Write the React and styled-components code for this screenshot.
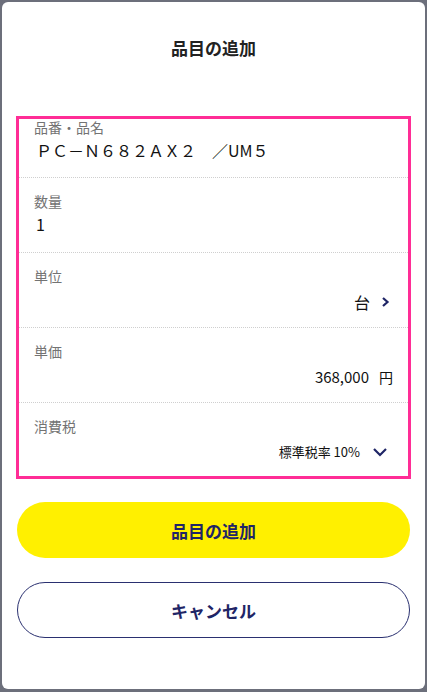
import React from "react";
import styled, { createGlobalStyle } from "styled-components";

const Global = createGlobalStyle`
  html, body { margin: 0; padding: 0; }
  body {
    background: #6c6f7b;
    font-family: "Noto Sans CJK JP", "Noto Sans", sans-serif;
    -webkit-font-smoothing: antialiased;
  }
`;

const Backdrop = styled.div`
  padding: 2px 2px 3px 2px;
  height: 692px;
  box-sizing: border-box;
`;

const Modal = styled.div`
  background: #fff;
  border-radius: 6px;
  height: 100%;
  box-sizing: border-box;
  padding: 34px 14px 0 14px;
  display: flex;
  flex-direction: column;
`;

const Title = styled.h1`
  margin: 0;
  font-size: 17px;
  line-height: 24px;
  font-weight: 700;
  color: #222;
  text-align: center;
`;

const Form = styled.div`
  margin-top: 56px;
  border: 3px solid #ff2d96;
  display: flex;
  flex-direction: column;
`;

const Row = styled.div`
  height: ${(p) => p.$h}px;
  box-sizing: border-box;
  padding: ${(p) => (p.$first ? 0 : 15)}px 22px 0 15px;
  border-top: ${(p) => (p.$first ? "none" : "1px dotted #cfcfcf")};
  display: flex;
  flex-direction: column;
`;

const Label = styled.div`
  font-size: 14px;
  line-height: 16px;
  color: #737373;
`;

const Value = styled.div`
  margin-top: ${(p) => (p.$right ? 6 : 3)}px;
  font-size: ${(p) => p.$size || 16}px;
  line-height: 24px;
  color: #111;
  display: flex;
  align-items: center;
  justify-content: ${(p) => (p.$right ? "flex-end" : "flex-start")};
  gap: ${(p) => p.$gap || 0}px;
  padding-left: ${(p) => (p.$right ? 0 : 2)}px;
`;

const Unit = styled.span`
  font-size: 14px;
  margin-left: 10px;
  margin-right: -7px;
`;

const Buttons = styled.div`
  display: flex;
  flex-direction: column;
  gap: 24px;
  margin: 23px 1px 0 1px;
`;

const Button = styled.button`
  height: 56px;
  border-radius: 28px;
  font-family: inherit;
  font-size: 17px;
  font-weight: 700;
  color: #1f2566;
  background: ${(p) => (p.$primary ? "#fff000" : "#fff")};
  border: ${(p) => (p.$primary ? "none" : "1px solid #2a3070")};
  cursor: pointer;
`;

const ChevronRight = () => (
  <svg width="10" height="12" viewBox="0 0 10 12" style={{ marginRight: -4 }}>
    <path d="M3 2 L7.5 6 L3 10" fill="none" stroke="#1f2566" strokeWidth="2.2" />
  </svg>
);

const ChevronDown = () => (
  <svg width="16" height="10" viewBox="0 0 16 10" style={{ marginRight: -2 }}>
    <path d="M2 2 L8 8 L14 2" fill="none" stroke="#1f2566" strokeWidth="2.2" />
  </svg>
);

export default function App() {
  return (
    <>
      <Global />
      <Backdrop>
        <Modal>
          <Title>品目の追加</Title>
          <Form>
            <Row $first $h={58}>
              <Label>品番・品名</Label>
              <Value>ＰＣ－Ｎ６８２ＡＸ２　／UM５</Value>
            </Row>
            <Row $h={75}>
              <Label>数量</Label>
              <Value>1</Value>
            </Row>
            <Row $h={75}>
              <Label>単位</Label>
              <Value $right $gap={10}>
                台<ChevronRight />
              </Value>
            </Row>
            <Row $h={75}>
              <Label>単価</Label>
              <Value $right $size={15}>
                368,000<Unit>円</Unit>
              </Value>
            </Row>
            <Row $h={74}>
              <Label>消費税</Label>
              <Value $right $size={13} $gap={12}>
                標準税率 10%<ChevronDown />
              </Value>
            </Row>
          </Form>
          <Buttons>
            <Button $primary>品目の追加</Button>
            <Button>キャンセル</Button>
          </Buttons>
        </Modal>
      </Backdrop>
    </>
  );
}
